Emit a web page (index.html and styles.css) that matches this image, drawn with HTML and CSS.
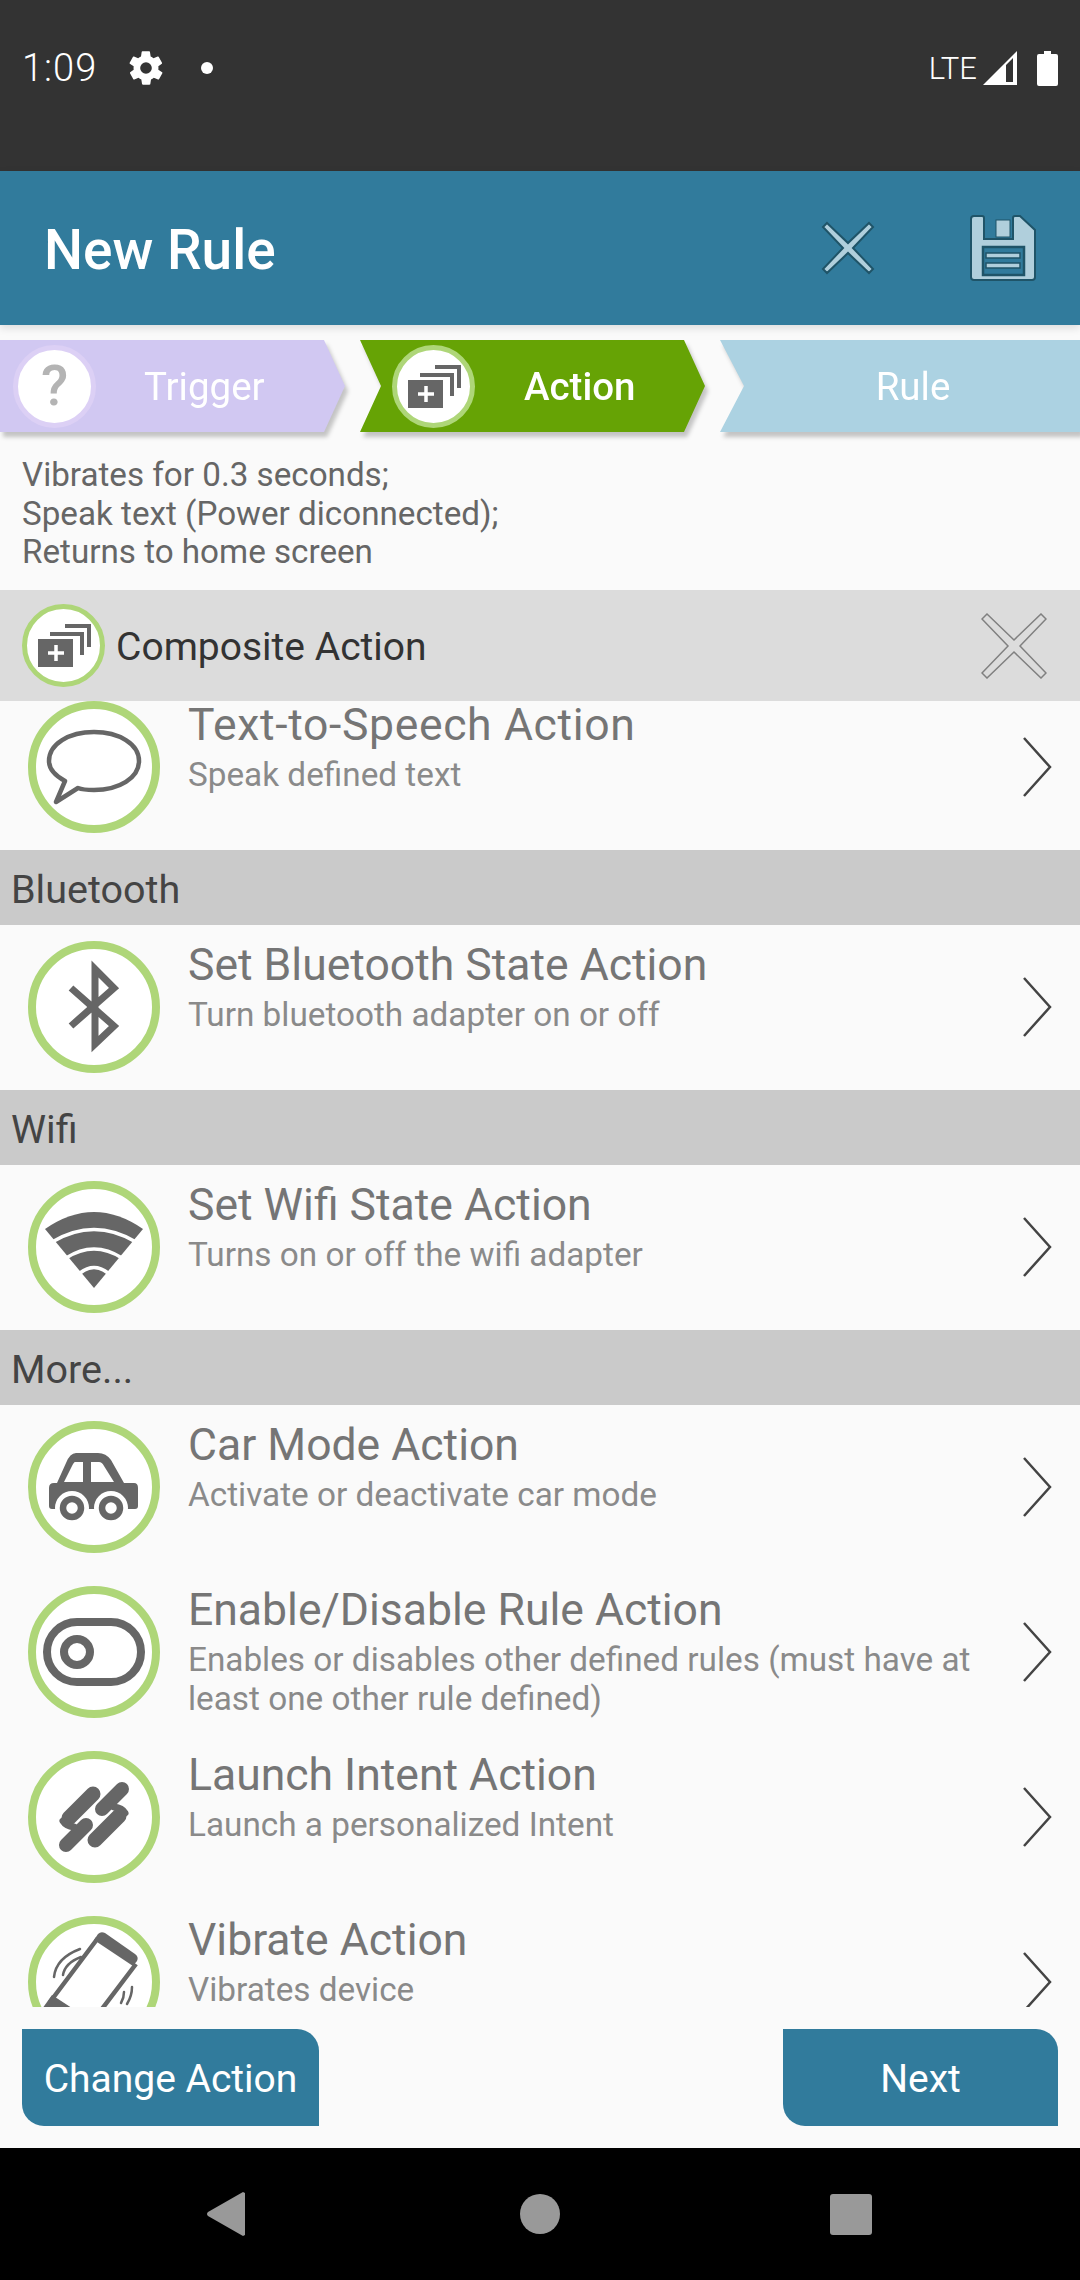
FILE: index.html
```html
<!DOCTYPE html>
<html lang="en">
<head>
<meta charset="utf-8">
<title>New Rule</title>
<link rel="stylesheet" href="styles.css">
</head>
<body>
<div class="screen">
  <header class="statusbar">
    <div class="status-left">
      <span class="clock">1:09</span>
      <svg class="gear" viewBox="0 0 24 24"><path d="M19.4 13a7.5 7.5 0 0 0 0-2l2.1-1.6a.5.5 0 0 0 .1-.6l-2-3.5a.5.5 0 0 0-.6-.2l-2.5 1a7.3 7.3 0 0 0-1.7-1l-.4-2.6a.5.5 0 0 0-.5-.5h-4a.5.5 0 0 0-.5.4l-.4 2.7a7.6 7.6 0 0 0-1.7 1l-2.5-1a.5.5 0 0 0-.6.2l-2 3.5a.5.5 0 0 0 .1.6L4.6 11a7.5 7.5 0 0 0 0 2l-2.1 1.6a.5.5 0 0 0-.1.6l2 3.5c.1.2.4.3.6.2l2.5-1c.5.4 1.1.7 1.7 1l.4 2.6c0 .3.2.5.5.5h4c.2 0 .5-.2.5-.4l.4-2.7a7.6 7.6 0 0 0 1.7-1l2.5 1c.2.1.5 0 .6-.2l2-3.5a.5.5 0 0 0-.1-.6zM12 15.5a3.5 3.5 0 1 1 0-7 3.5 3.5 0 0 1 0 7z"/></svg>
      <span class="dot"></span>
    </div>
    <div class="status-right">
      <span class="lte">LTE</span>
      <svg class="signal" viewBox="0 0 34 34"><path d="M34 0V34H0zM30 7 23 14V31H30z" fill-rule="evenodd"/></svg>
      <svg class="battery" viewBox="0 0 21 35"><path d="M7 0h7v3h5a2 2 0 0 1 2 2v28a2 2 0 0 1-2 2H2a2 2 0 0 1-2-2V5a2 2 0 0 1 2-2h5z"/></svg>
    </div>
  </header>

  <div class="appbar">
    <h1 class="appbar-title">New Rule</h1>
    <div class="appbar-actions">
      <svg class="appbar-x" viewBox="0 0 54 54"><path d="M6 2 27 22 48 2 52 6 32 27 52 48 48 52 27 32 6 52 2 48 22 27 2 6z"/></svg>
      <svg class="appbar-save" viewBox="0 0 66 66"><path class="save-body" d="M4 1H12Q14 1 14 3V24H43V3Q43 1 45 1H50L65 15V62Q65 65 62 65H4Q1 65 1 62V4Q1 1 4 1z"/><rect class="save-part" x="26" y="5" width="14" height="17"/><rect class="save-window" x="13" y="32" width="41" height="28"/><rect class="save-part thin" x="16" y="38" width="34" height="5"/><rect class="save-part thin" x="16" y="48" width="34" height="5"/></svg>
    </div>
  </div>

  <main class="content">
    <nav class="steps">
      <div class="step step-trigger">
        <span class="step-badge badge-purple"><span class="question">?</span></span>
        <span class="step-label">Trigger</span>
      </div>
      <div class="step step-action">
        <span class="step-badge badge-green">
          <svg class="composite-svg" viewBox="5 5 73 73"><use href="#composite"/></svg>
        </span>
        <span class="step-label strong">Action</span>
      </div>
      <div class="step step-rule">
        <span class="step-label">Rule</span>
      </div>
    </nav>

    <p class="summary">Vibrates for 0.3 seconds;<br>Speak text (Power diconnected);<br>Returns to home screen</p>

    <div class="selected">
      <span class="step-badge badge-green">
        <svg class="composite-svg" viewBox="5 5 73 73"><use href="#composite"/></svg>
      </span>
      <span class="selected-name">Composite Action</span>
      <svg class="selected-x" viewBox="0 0 66 66"><path d="M6 1 33 27 60 1 65 6 39 33 65 60 60 65 33 39 6 65 1 60 27 33 1 6z"/></svg>
    </div>

    <div class="list-clip">
      <div class="list">
        <div class="item">
          <span class="ring"><svg class="glyph" viewBox="0 0 132 132"><path class="line" d="M37 80C26 74 21 67 21 60 21 43 41 31 66 31 91 31 111 43 111 60 111 77 91 89 66 89 61 89 55 89 50 87L28 101z"/></svg></span>
          <div class="item-text"><div class="item-title title-wide">Text-to-Speech Action</div><div class="item-sub">Speak defined text</div></div>
          <svg class="chev" viewBox="0 0 30 62"><path d="M2 2 28 31 2 60"/></svg>
        </div>
        <div class="section">Bluetooth</div>
        <div class="item">
          <span class="ring"><svg class="glyph" viewBox="0 0 132 132"><path class="bt" d="M43 47 86 85 67 103V28L86 47 43 85"/></svg></span>
          <div class="item-text"><div class="item-title">Set Bluetooth State Action</div><div class="item-sub">Turn bluetooth adapter on or off</div></div>
          <svg class="chev" viewBox="0 0 30 62"><path d="M2 2 28 31 2 60"/></svg>
        </div>
        <div class="section">Wifi</div>
        <div class="item">
          <span class="ring"><svg class="glyph" viewBox="0 0 132 132"><path class="solid" d="M17 48Q66 14 115 48L66 107z"/><path class="gap" d="M24 61Q66 36 108 61M38 77Q66 59 94 77M52 92Q66 81 80 92"/></svg></span>
          <div class="item-text"><div class="item-title">Set Wifi State Action</div><div class="item-sub">Turns on or off the wifi adapter</div></div>
          <svg class="chev" viewBox="0 0 30 62"><path d="M2 2 28 31 2 60"/></svg>
        </div>
        <div class="section">More...</div>
        <div class="item">
          <span class="ring"><svg class="glyph" viewBox="0 0 132 132"><path class="solid" fill-rule="evenodd" d="M48 32H70Q78 32 83 39L96 62H106Q110 62 110 67V85Q110 88 107 88H24Q21 88 21 85V67Q21 62 26 62H29L38 42Q42 32 48 32zM47 41Q46 41 44 45L36 61H55V41zM63 41V61H86L76 45Q74 41 71 41z"/><circle class="wheel-gap" cx="44" cy="87" r="17"/><circle class="wheel-gap" cx="83" cy="87" r="17"/><circle class="wheel" cx="44" cy="87" r="9"/><circle class="wheel" cx="83" cy="87" r="9"/></svg></span>
          <div class="item-text"><div class="item-title">Car Mode Action</div><div class="item-sub">Activate or deactivate car mode</div></div>
          <svg class="chev" viewBox="0 0 30 62"><path d="M2 2 28 31 2 60"/></svg>
        </div>
        <div class="item">
          <span class="ring"><svg class="glyph" viewBox="0 0 132 132"><rect class="toggle" x="19" y="36" width="94" height="60" rx="30"/><circle class="knob" cx="49" cy="66" r="13"/></svg></span>
          <div class="item-text"><div class="item-title">Enable/Disable Rule Action</div><div class="item-sub">Enables or disables other defined rules (must have at least one other rule defined)</div></div>
          <svg class="chev" viewBox="0 0 30 62"><path d="M2 2 28 31 2 60"/></svg>
        </div>
        <div class="item">
          <span class="ring"><svg class="glyph" viewBox="0 0 132 132"><path class="link" d="M65 43 41 67M91 65 67 89"/><path class="link slim" d="M94 38 74 58M58 74 38 94"/><path class="hook" d="M35 70Q38 75 46 76M97 62Q94 57 86 56"/></svg></span>
          <div class="item-text"><div class="item-title">Launch Intent Action</div><div class="item-sub">Launch a personalized Intent</div></div>
          <svg class="chev" viewBox="0 0 30 62"><path d="M2 2 28 31 2 60"/></svg>
        </div>
        <div class="item">
          <span class="ring"><svg class="glyph" viewBox="0 0 132 132"><path class="line" d="M70 22 22 86M108 48 58 114"/><path class="solid" d="M66 24 70 18Q73 15 77 17L107 38Q111 41 109 45L105 50z"/><path class="solid" d="M24 79 50 96 40 110 14 93z"/><path class="vibe" d="M26 61Q28 42 52 33M35 59Q37 47 53 41M104 71Q104 80 99 88M96 76Q96 82 93 87"/></svg></span>
          <div class="item-text"><div class="item-title">Vibrate Action</div><div class="item-sub">Vibrates device</div></div>
          <svg class="chev" viewBox="0 0 30 62"><path d="M2 2 28 31 2 60"/></svg>
        </div>
      </div>
    </div>

    <div class="footer">
      <button class="btn btn-change">Change Action</button>
      <button class="btn btn-next">Next</button>
    </div>
  </main>

  <footer class="navbar">
    <svg class="nav-back" viewBox="0 0 38 44"><path d="M38 1V43L36 44 1 24Q-1 22 1 20L36 0z"/></svg>
    <span class="nav-home"></span>
    <span class="nav-recent"></span>
  </footer>
</div>

<svg class="defs" width="0" height="0">
  <defs>
    <g id="composite">
      <rect x="16" y="35" width="35" height="28" fill="#666"/>
      <path d="M28 30H60V51" fill="none" stroke="#666" stroke-width="4"/>
      <path d="M43 22H67V43" fill="none" stroke="#666" stroke-width="4"/>
      <path d="M34 41V57M26 49H42" fill="none" stroke="#fff" stroke-width="3.5"/>
    </g>
  </defs>
</svg>
</body>
</html>
```
FILE: styles.css
```css
* { box-sizing: border-box; }
html, body { margin: 0; padding: 0; }
body { font-family: Roboto, "Liberation Sans", sans-serif; background: #fafafa; }
.screen { width: 1080px; height: 2280px; display: flex; flex-direction: column; overflow: hidden; }
.defs { position: absolute; }

.statusbar { height: 171px; flex: none; background: #333; color: #fff; display: flex; justify-content: space-between; align-items: flex-start; padding: 48px 22px 0 22px; }
.status-left { display: flex; align-items: center; height: 40px; }
.clock { font-size: 38px; font-weight: 300; letter-spacing: 1px; width: 77px; }
.gear { width: 40px; height: 40px; fill: #fff; margin-left: 27px; }
.dot { width: 12px; height: 12px; border-radius: 50%; background: #fff; margin-left: 35px; }
.status-right { display: flex; align-items: center; height: 40px; }
.lte { font-size: 31px; font-weight: 300; margin-right: 6px; }
.signal { width: 34px; height: 34px; fill: #fff; margin-right: 20px; }
.battery { width: 21px; height: 35px; fill: #fff; }

.appbar { height: 154px; flex: none; background: #317b9c; display: flex; align-items: center; justify-content: space-between; padding: 0 44px 0 44px; box-shadow: 0 3px 8px rgba(0,0,0,.12); position: relative; }
.appbar-title { margin: 0; padding-top: 4px; color: #fff; font-size: 55px; font-weight: 500; }
.appbar-actions { display: flex; align-items: center; gap: 95px; }
.appbar-x { width: 54px; height: 54px; fill: #b0cfdc; stroke: #1f5468; stroke-width: 2; }
.appbar-save { width: 66px; height: 66px; }
.save-body { fill: #b0cfdc; stroke: #1f5468; stroke-width: 2; }
.save-part { fill: #b0cfdc; stroke: #1f5468; stroke-width: 1; }
.save-part.thin { stroke-width: 1.5; }
.save-window { fill: #317b9c; stroke: #1f5468; stroke-width: 2.5; }

.content { flex: 1; min-height: 0; display: flex; flex-direction: column; }

.steps { height: 92px; margin-top: 15px; flex: none; display: flex; position: relative; }
.step { height: 92px; display: flex; align-items: center; color: #fff; font-size: 38.5px; filter: drop-shadow(3px 5px 2px rgba(0,0,0,.22)); position: relative; }
.step::before { content: ""; position: absolute; inset: 0; z-index: 0; }
.step > * { position: relative; z-index: 1; }
.step-trigger { width: 345px; padding-left: 13px; }
.step-trigger::before { background: #d1c8f2; clip-path: polygon(0 0, 324px 0, 345px 46px, 324px 92px, 0 92px); }
.step-action { width: 345px; margin-left: 15px; padding-left: 32px; }
.step-action::before { background: #66a305; clip-path: polygon(0 0, 324px 0, 345px 46px, 324px 92px, 0 92px, 21px 46px); }
.step-rule { width: 360px; margin-left: 15px; justify-content: center; padding-left: 26px; }
.step-rule::before { background: #acd2e2; clip-path: polygon(0 0, 100% 0, 100% 100%, 0 100%, 24px 46px); }
.step-label { line-height: 1; padding-top: 3px; }
.step-trigger .step-label { margin-left: 48px; }
.step-action .step-label { margin-left: 49px; }
.step-label.strong { font-weight: 500; }
.step-badge { width: 83px; height: 83px; border-radius: 50%; display: flex; align-items: center; justify-content: center; background: #fff; flex: none; }
.badge-purple { border: 5px solid #dcd0f5; }
.badge-green { border: 5px solid #aed678; }
.question { font-size: 56px; font-weight: 500; color: #b4b4b4; line-height: 1; }
.composite-svg { width: 73px; height: 73px; }

.summary { margin: 0; height: 158px; flex: none; padding: 24px 22px 0; font-size: 33.2px; line-height: 38.5px; color: #666; }

.selected { height: 111px; flex: none; background: #dcdcdc; display: flex; align-items: center; padding: 0 33px 0 22px; }
.selected-name { flex: 1; margin-left: 11px; padding-top: 2px; font-size: 39px; color: #333; }
.selected-x { width: 66px; height: 66px; fill: #dcdcdc; stroke: #808080; stroke-width: 1.5; }

.list-clip { height: 1306px; flex: none; overflow: hidden; }
.list { margin-top: -16px; }
.item { height: 165px; display: flex; align-items: center; padding: 0 28px 1px 28px; }
.ring { width: 132px; height: 132px; border-radius: 50%; border: 8px solid #aed678; background: #fff; flex: none; position: relative; display: block; }
.glyph { position: absolute; left: -8px; top: -8px; width: 132px; height: 132px; }
.line { fill: none; stroke: #666; stroke-width: 4.5; stroke-linejoin: round; }
.solid { fill: #666; }
.gap { fill: none; stroke: #fff; stroke-width: 3.5; }
.wheel-gap { fill: #fff; }
.wheel { fill: #fff; stroke: #666; stroke-width: 6.5; }
.toggle { fill: none; stroke: #666; stroke-width: 8; }
.knob { fill: #fff; stroke: #666; stroke-width: 8; }
.bt { fill: none; stroke: #666; stroke-width: 7; }
.link { fill: none; stroke: #666; stroke-width: 15; stroke-linecap: round; }
.link.slim { stroke-width: 14; }
.hook { fill: none; stroke: #666; stroke-width: 7; stroke-linecap: round; }
.vibe { fill: none; stroke: #666; stroke-width: 2.5; stroke-linecap: round; }
.item-text { flex: 1; margin-left: 28px; align-self: flex-start; padding-top: 17px; padding-right: 41px; }
.item-title { font-size: 44.5px; line-height: 47px; color: #757575; }
.title-wide { letter-spacing: .65px; }
.item-sub { font-size: 33.3px; line-height: 39px; color: #8a8a8a; margin-top: 6px; }
.chev { width: 30px; height: 62px; flex: none; fill: none; stroke: #444; stroke-width: 2.5; }

.section { height: 75px; background: #cacaca; display: flex; align-items: center; padding: 3px 0 0 11px; font-size: 39.5px; color: #444; }

.footer { flex: 1; display: flex; justify-content: space-between; align-items: flex-start; padding: 22px 22px 0; }
.btn { height: 97px; border: 0; background: #317b9c; color: #fff; font-family: inherit; font-size: 39px; font-weight: 400; border-radius: 0 22px 0 22px; padding: 2px 0 0; }
.btn-change { width: 297px; }
.btn-next { width: 275px; }

.navbar { height: 132px; flex: none; background: #000; position: relative; }
.nav-back { width: 38px; height: 44px; fill: #999; position: absolute; left: 207px; top: 44px; }
.nav-home { width: 40px; height: 40px; border-radius: 50%; background: #999; position: absolute; left: 520px; top: 46px; }
.nav-recent { width: 42px; height: 41px; border-radius: 3px; background: #999; position: absolute; left: 830px; top: 46px; }
```
